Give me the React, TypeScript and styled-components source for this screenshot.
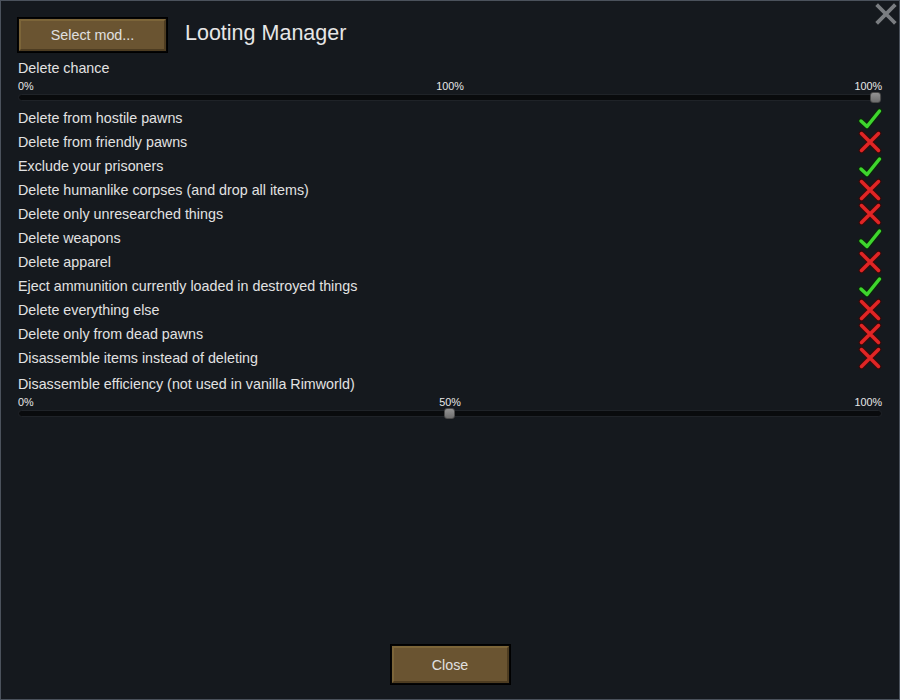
import React from "react";
import styled, { createGlobalStyle } from "styled-components";

const GlobalStyle = createGlobalStyle`
  html, body {
    margin: 0;
    padding: 0;
    background: #15191e;
  }
  body {
    font-family: "Liberation Sans", Arial, sans-serif;
    color: #e2e2e2;
  }
`;

type Setting = { label: string; on: boolean };

const settings: Setting[] = [
  { label: "Delete from hostile pawns", on: true },
  { label: "Delete from friendly pawns", on: false },
  { label: "Exclude your prisoners", on: true },
  { label: "Delete humanlike corpses (and drop all items)", on: false },
  { label: "Delete only unresearched things", on: false },
  { label: "Delete weapons", on: true },
  { label: "Delete apparel", on: false },
  { label: "Eject ammunition currently loaded in destroyed things", on: true },
  { label: "Delete everything else", on: false },
  { label: "Delete only from dead pawns", on: false },
  { label: "Disassemble items instead of deleting", on: false },
];

const Window = styled.div`
  position: relative;
  box-sizing: border-box;
  width: 900px;
  height: 700px;
  border: 1px solid #4b525c;
  background: #15191e;
  padding: 17px 17px 15px 17px;
  display: flex;
  flex-direction: column;
`;

const CloseCorner = styled.button`
  position: absolute;
  top: 2px;
  right: 2px;
  width: 22px;
  height: 22px;
  padding: 0;
  border: none;
  background: none;
  cursor: pointer;
`;

const Header = styled.div`
  display: flex;
  align-items: center;
  gap: 18px;
`;

const WoodButton = styled.button<{ $w: number; $h: number }>`
  box-sizing: border-box;
  width: ${({ $w }) => $w}px;
  height: ${({ $h }) => $h}px;
  background: #6a5431;
  border-style: solid;
  border-width: 3px;
  border-color: #7c6539 #4d3c21 #4d3c21 #7c6539;
  outline: 1px solid #050505;
  outline-offset: -1px;
  box-shadow: 0 0 0 1px #000;
  color: #e0e0e0;
  font-family: "Liberation Sans", Arial, sans-serif;
  font-size: 14.3px;
  padding: 0;
  cursor: pointer;
`;

const Title = styled.h1`
  margin: 0;
  font-weight: normal;
  font-size: 21.5px;
  color: #e6e6e6;
  position: relative;
  top: -2px;
`;

const SliderBlock = styled.div<{ $top: number }>`
  margin-top: ${({ $top }) => $top}px;
  display: flex;
  flex-direction: column;
`;

const Label = styled.div`
  height: 24px;
  line-height: 24px;
  font-size: 14.3px;
  white-space: nowrap;
`;

const ValueRow = styled.div`
  display: grid;
  grid-template-columns: 1fr auto 1fr;
  height: 10px;
  line-height: 12px;
  font-size: 10.8px;
  color: #e8e8e8;
`;

const ValueLeft = styled.span`
  text-align: left;
`;
const ValueRight = styled.span`
  text-align: right;
`;

const Track = styled.div`
  position: relative;
  margin-top: 4px;
  height: 7px;
  box-sizing: border-box;
  background: #090b0d;
  border: 1px solid #1f2328;
  border-radius: 4px;
`;

const Handle = styled.div`
  position: absolute;
  top: -3px;
  width: 11px;
  height: 11px;
  box-sizing: border-box;
  margin-left: -6px;
  border-radius: 3px;
  background: linear-gradient(#939393, #6e6e6e);
  border: 1px solid #4a4a4a;
`;

const Rows = styled.div`
  margin-top: 5px;
  display: flex;
  flex-direction: column;
`;

const Row = styled.div`
  display: flex;
  align-items: center;
  justify-content: space-between;
  height: 24px;
  font-size: 14.3px;
`;

const Footer = styled.div`
  margin-top: auto;
  display: flex;
  justify-content: center;
`;

const Check = () => (
  <svg width="24" height="24" viewBox="0 0 24 24">
    <path
      d="M3 15 L9 20.5 L21.5 5"
      fill="none"
      stroke="#0a2a08"
      strokeWidth="5.5"
      strokeLinecap="round"
      strokeLinejoin="round"
    />
    <path
      d="M3 15 L9 20.5 L21.5 5"
      fill="none"
      stroke="#3ed52e"
      strokeWidth="3.5"
      strokeLinecap="round"
      strokeLinejoin="round"
    />
  </svg>
);

const Cross = () => (
  <svg width="24" height="24" viewBox="0 0 24 24">
    <path
      d="M3.5 3.5 L20.5 20.5 M20.5 3.5 L3.5 20.5"
      fill="none"
      stroke="#3a0a0a"
      strokeWidth="5.5"
      strokeLinecap="round"
    />
    <path
      d="M3.5 3.5 L20.5 20.5 M20.5 3.5 L3.5 20.5"
      fill="none"
      stroke="#e02525"
      strokeWidth="3.5"
      strokeLinecap="round"
    />
  </svg>
);

const Slider = ({
  label,
  min,
  mid,
  max,
  pos,
  top,
}: {
  label: string;
  min: string;
  mid: string;
  max: string;
  pos: number;
  top: number;
}) => (
  <SliderBlock $top={top}>
    <Label>{label}</Label>
    <ValueRow>
      <ValueLeft>{min}</ValueLeft>
      <span>{mid}</span>
      <ValueRight>{max}</ValueRight>
    </ValueRow>
    <Track>
      <Handle style={{ left: `${pos * 100}%` }} />
    </Track>
  </SliderBlock>
);

export default function App() {
  return (
    <>
      <GlobalStyle />
      <Window>
        <CloseCorner aria-label="Close">
          <svg width="22" height="22" viewBox="0 0 22 22">
            <path
              d="M3 3 L19 19 M19 3 L3 19"
              stroke="#7a7d81"
              strokeWidth="3.8"
              strokeLinecap="square"
            />
          </svg>
        </CloseCorner>
        <Header>
          <WoodButton $w={149} $h={34}>Select mod...</WoodButton>
          <Title>Looting Manager</Title>
        </Header>
        <Slider
          label="Delete chance"
          min="0%"
          mid="100%"
          max="100%"
          pos={0.994}
          top={4}
        />
        <Rows>
          {settings.map((s) => (
            <Row key={s.label}>
              <span>{s.label}</span>
              {s.on ? <Check /> : <Cross />}
            </Row>
          ))}
        </Rows>
        <Slider
          label="Disassemble efficiency (not used in vanilla Rimworld)"
          min="0%"
          mid="50%"
          max="100%"
          pos={0.5}
          top={2}
        />
        <Footer>
          <WoodButton $w={119} $h={39}>Close</WoodButton>
        </Footer>
      </Window>
    </>
  );
}
